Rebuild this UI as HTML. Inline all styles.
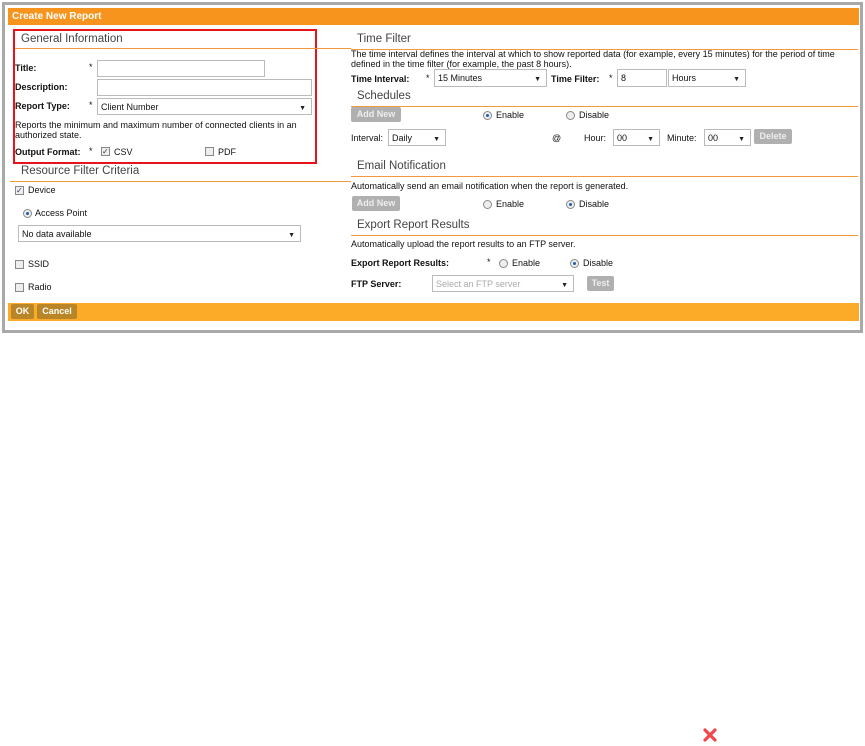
<!DOCTYPE html>
<html><head><style>
*{box-sizing:border-box;margin:0;padding:0}
body{width:865px;height:746px;background:#fff;font-family:"Liberation Sans",sans-serif;font-size:9px;color:#111;position:relative;overflow:hidden}
.a{position:absolute;white-space:nowrap}
.b{font-weight:bold}
.h{font-size:11.5px;color:#444}
.ln{position:absolute;height:1px;background:#f39a3a}
.inp{position:absolute;border:1px solid #bbb;background:#fff;font-size:9px;padding:3px 3px 0;line-height:11px}
.sel:after{content:"▼";position:absolute;right:5px;top:4px;font-size:7px;color:#222}
.btn{position:absolute;background:#b0b0b0;color:#eee;font-weight:bold;font-size:9px;border-radius:2px;text-align:center;line-height:14px}
.cb{position:absolute;width:9px;height:9px;border:1px solid #888;background:#eee}
.rd{position:absolute;width:9px;height:9px;border:1px solid #888;border-radius:50%;background:#eee}
.rd.on:after{content:"";position:absolute;left:2px;top:2px;width:3px;height:3px;border-radius:50%;background:#1d5fa8}
</style></head><body>
<div class="a" style="left:2px;top:2px;width:861px;height:331px;border:3px solid #a9a9a9"></div>
<div class="a" style="left:8px;top:8px;width:851px;height:17px;background:#f7941e;color:#fff;font-weight:bold;font-size:10px;padding:3px 4px">Create New Report</div>
<div class="a" style="left:13px;top:29px;width:304px;height:135px;border:2px solid #e8141b"></div>
<div class="a h" style="left:21px;top:33px">General Information</div>
<div class="ln" style="left:15px;top:48px;width:336px"></div>
<div class="a b" style="left:15px;top:63px">Title:</div><div class="a" style="left:89px;top:62px">*</div>
<div class="inp" style="left:97px;top:60px;width:168px;height:17px"></div>
<div class="a b" style="left:15px;top:82px">Description:</div>
<div class="inp" style="left:97px;top:79px;width:215px;height:17px"></div>
<div class="a b" style="left:15px;top:101px">Report Type:</div><div class="a" style="left:89px;top:100px">*</div>
<div class="inp sel" style="left:97px;top:98px;width:215px;height:17px">Client Number</div>
<div class="a" style="left:15px;top:120px;line-height:10px">Reports the minimum and maximum number of connected clients in an<br>authorized state.</div>
<div class="a b" style="left:15px;top:147px">Output Format:</div><div class="a" style="left:89px;top:146px">*</div>
<div class="cb" style="left:101px;top:147px;font-size:8px;line-height:7px;color:#335">✓</div><div class="a" style="left:114px;top:147px">CSV</div>
<div class="cb" style="left:205px;top:147px"></div><div class="a" style="left:218px;top:147px">PDF</div>
<div class="a h" style="left:21px;top:165px">Resource Filter Criteria</div>
<div class="ln" style="left:10px;top:181px;width:341px"></div>
<div class="cb" style="left:15px;top:186px;font-size:8px;line-height:7px;color:#335">✓</div><div class="a" style="left:28px;top:185px">Device</div>
<div class="rd on" style="left:23px;top:209px"></div><div class="a" style="left:35px;top:208px">Access Point</div>
<div class="inp sel" style="left:18px;top:225px;width:283px;height:17px">No data available</div>
<div class="cb" style="left:15px;top:260px"></div><div class="a" style="left:28px;top:259px">SSID</div>
<div class="cb" style="left:15px;top:283px"></div><div class="a" style="left:28px;top:282px">Radio</div>

<div class="a h" style="left:357px;top:33px">Time Filter</div>
<div class="ln" style="left:351px;top:49px;width:507px"></div>
<div class="a" style="left:351px;top:50px;line-height:9.5px">The time interval defines the interval at which to show reported data (for example, every 15 minutes) for the period of time<br>defined in the time filter (for example, the past 8 hours).</div>
<div class="a b" style="left:351px;top:74px">Time Interval:</div><div class="a" style="left:426px;top:73px">*</div>
<div class="inp sel" style="left:434px;top:69px;width:113px;height:18px">15 Minutes</div>
<div class="a b" style="left:551px;top:74px">Time Filter:</div><div class="a" style="left:609px;top:73px">*</div>
<div class="inp" style="left:617px;top:69px;width:50px;height:18px">8</div>
<div class="inp sel" style="left:668px;top:69px;width:78px;height:18px">Hours</div>
<div class="a h" style="left:357px;top:90px">Schedules</div>
<div class="ln" style="left:351px;top:106px;width:507px"></div>
<div class="btn" style="left:351px;top:107px;width:50px;height:15px">Add New</div>
<div class="rd on" style="left:483px;top:111px"></div><div class="a" style="left:496px;top:110px">Enable</div>
<div class="rd" style="left:566px;top:111px"></div><div class="a" style="left:579px;top:110px">Disable</div>
<div class="a" style="left:351px;top:133px">Interval:</div>
<div class="inp sel" style="left:388px;top:129px;width:58px;height:17px">Daily</div>
<div class="a" style="left:552px;top:133px">@</div>
<div class="a" style="left:584px;top:133px">Hour:</div>
<div class="inp sel" style="left:613px;top:129px;width:47px;height:17px">00</div>
<div class="a" style="left:667px;top:133px">Minute:</div>
<div class="inp sel" style="left:704px;top:129px;width:47px;height:17px">00</div>
<div class="btn" style="left:754px;top:129px;width:38px;height:15px">Delete</div>
<div class="a h" style="left:357px;top:160px">Email Notification</div>
<div class="ln" style="left:351px;top:176px;width:507px"></div>
<div class="a" style="left:351px;top:181px">Automatically send an email notification when the report is generated.</div>
<div class="btn" style="left:352px;top:196px;width:48px;height:15px">Add New</div>
<div class="rd" style="left:483px;top:200px"></div><div class="a" style="left:496px;top:199px">Enable</div>
<div class="rd on" style="left:566px;top:200px"></div><div class="a" style="left:579px;top:199px">Disable</div>
<div class="a h" style="left:357px;top:219px">Export Report Results</div>
<div class="ln" style="left:351px;top:235px;width:507px"></div>
<div class="a" style="left:351px;top:239px">Automatically upload the report results to an FTP server.</div>
<div class="a b" style="left:351px;top:258px">Export Report Results:</div><div class="a" style="left:487px;top:257px">*</div>
<div class="rd" style="left:499px;top:259px"></div><div class="a" style="left:512px;top:258px">Enable</div>
<div class="rd on" style="left:570px;top:259px"></div><div class="a" style="left:583px;top:258px">Disable</div>
<div class="a b" style="left:351px;top:279px">FTP Server:</div>
<div class="inp sel" style="left:432px;top:275px;width:142px;height:17px;color:#aaa">Select an FTP server</div>
<div class="btn" style="left:587px;top:276px;width:27px;height:15px">Test</div>

<div class="a" style="left:8px;top:303px;width:851px;height:18px;background:#fcab28"></div>
<div class="a" style="left:11px;top:304px;width:23px;height:15px;background:#b88626;color:#fff;font-weight:bold;border-radius:2px;text-align:center;line-height:15px">OK</div>
<div class="a" style="left:37px;top:304px;width:40px;height:15px;background:#b88626;color:#fff;font-weight:bold;border-radius:2px;text-align:center;line-height:15px">Cancel</div>
<svg class="a" style="left:702px;top:727px" width="16" height="16"><path d="M3 3L13 13M13 3L3 13" stroke="#f0474d" stroke-width="3.2" stroke-linecap="round"/></svg>
</body></html>
